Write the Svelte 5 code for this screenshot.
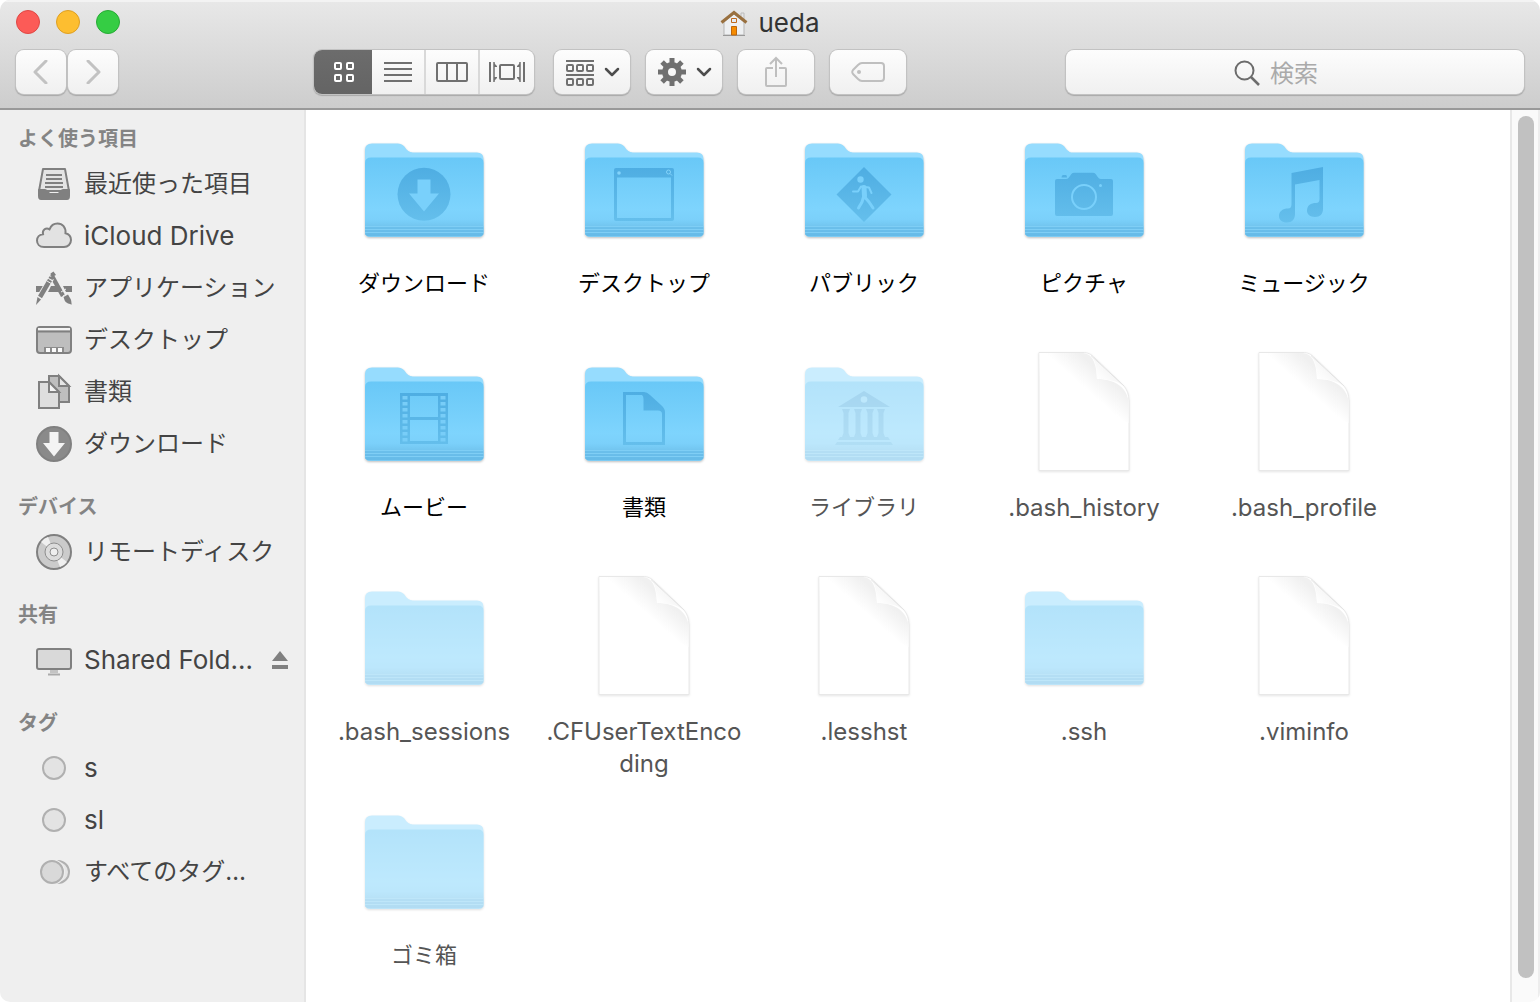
<script>
	const sections = [
		{
			title: 'よく使う項目',
			items: [
				{ name: '最近使った項目', icon: 'recents' },
				{ name: 'iCloud Drive', icon: 'cloud' },
				{ name: 'アプリケーション', icon: 'apps' },
				{ name: 'デスクトップ', icon: 'desktop' },
				{ name: '書類', icon: 'documents' },
				{ name: 'ダウンロード', icon: 'downloads' }
			]
		},
		{ title: 'デバイス', items: [{ name: 'リモートディスク', icon: 'disc' }] },
		{ title: '共有', items: [{ name: 'Shared Fold…', icon: 'monitor', eject: true }] },
		{
			title: 'タグ',
			items: [
				{ name: 's', icon: 'tag' },
				{ name: 'sl', icon: 'tag' },
				{ name: 'すべてのタグ…', icon: 'tags' }
			]
		}
	];

	const files = [
		{ name: 'ダウンロード', glyph: 'downloads' },
		{ name: 'デスクトップ', glyph: 'desktop' },
		{ name: 'パブリック', glyph: 'public' },
		{ name: 'ピクチャ', glyph: 'pictures' },
		{ name: 'ミュージック', glyph: 'music' },
		{ name: 'ムービー', glyph: 'movies' },
		{ name: '書類', glyph: 'documents' },
		{ name: 'ライブラリ', glyph: 'library', hidden: true },
		{ name: '.bash_history', doc: true, hidden: true },
		{ name: '.bash_profile', doc: true, hidden: true },
		{ name: '.bash_sessions', hidden: true },
		{ name: '.CFUserTextEncoding', doc: true, hidden: true },
		{ name: '.lesshst', doc: true, hidden: true },
		{ name: '.ssh', hidden: true },
		{ name: '.viminfo', doc: true, hidden: true },
		{ name: 'ゴミ箱', hidden: true }
	];

	const views = ['アイコン', 'リスト', 'カラム', 'Cover Flow'];

	let view = $state(0);
	let query = $state('');

	// kana and kanji are set a little smaller than latin
	const isJa = (text) => /[\u3040-\u30ff\u4e00-\u9fff]/.test(text);
</script>

{#snippet chevron()}
	<svg width="16" height="10" viewBox="0 0 16 10" fill="none" stroke="#4d4d4d" stroke-width="2.500" stroke-linecap="round" stroke-linejoin="round">
		<path d="M2 2 8 8 14 2" />
	</svg>
{/snippet}

{#snippet sideIcon(kind)}
	<svg class="side-icon" width="36" height="36" viewBox="0 0 36 36" fill="none" stroke="#808080" stroke-width="2">
		{#if kind === 'recents'}
			<path d="M7 2H29L33 24H3Z" fill="#e4e4e4" stroke-linejoin="round" />
			<path d="M10 8H26M10 12H26M9 16H27M9 20H27" />
			<path d="M3 23H9C11 23 11 26 14 27H22C25 26 25 23 27 23H33V29Q33 32 31 32H5Q3 32 3 29Z" fill="#808080" stroke-linejoin="round" />
		{:else if kind === 'cloud'}
			<path d="M8 28C3.500 28 1 25 1 21.500C1 18 3.500 15.500 7 15.200C6 11 10 8 13.500 10.300C15 6.500 18 4.500 21.500 4.500C26.500 4.500 30 8.500 29.500 14.200C33 15 35 17.500 35 21C35 25 32 28 28 28Z" fill="#e2e2e2" />
		{:else if kind === 'apps'}
			<path d="M0 15H9L6 21H0ZM15 15H21L24 21H12ZM27 15H36V21H30Z" fill="#808080" stroke="none" />
			<path d="M16 5 27 25" stroke-width="4.500" />
			<path d="M14.500 2.500 17.500 0.500 20 4 16 6Z" fill="#808080" stroke="none" />
			<path d="M27.500 26 32 23.500 34 27C36 30 35 32 36 33.500C32 33 29 31 28.500 29Z" fill="#808080" stroke="none" />
			<path d="M15 7 3 28" stroke="#efefef" stroke-width="6.500" />
			<path d="M14 9 4 26" stroke-width="4.500" />
			<path d="M14.500 8 16.500 4.500" stroke-width="4.500" stroke-dasharray="2 1" />
			<path d="M1.500 26 5 28.500 0 34Z" fill="#808080" stroke="none" />
			<path d="M11 10 16 13M25 21 30 18M27 25 32 22" stroke="#efefef" stroke-width="1" />
		{:else if kind === 'desktop'}
			<rect x="1" y="4" width="34" height="26" rx="3" fill="#bebebe" />
			<path d="M2 5H34V7.500H2Z" fill="#f4f4f4" stroke="none" />
			<path d="M1 8.500H35" />
			<path d="M8 24H28V29H8Z" fill="#8c8c8c" stroke="none" />
			<path d="M10 25H14V29H10ZM16 25H20V29H16ZM22 25H26V29H22Z" fill="#fafafa" stroke="none" />
		{:else if kind === 'documents'}
			<path d="M13 1H23L33 11V27H13Z" fill="#bebebe" />
			<path d="M23 1V11H33Z" fill="#e6e6e6" />
			<path d="M3 7H13L23 17V33H3Z" fill="#dedede" />
			<path d="M13 7V17H23Z" fill="#f4f4f4" />
		{:else if kind === 'downloads'}
			<circle cx="18" cy="17" r="17" fill="#8a8a8a" />
			<path d="M13.500 5H22.500V16H29L18 29.500 7 16H13.500Z" fill="#f4f4f4" stroke="none" />
		{:else if kind === 'disc'}
			<circle cx="18" cy="17" r="17" fill="#cbcbcb" />
			<path d="M18 17 5 7Q8 3 12 2ZM18 17 31 27Q28 31 24 32Z" fill="#f0f0f0" stroke="none" />
			<circle cx="18" cy="17" r="9" fill="#dcdcdc" stroke="#8e8e8e" stroke-width="1" />
			<circle cx="18" cy="17" r="4" fill="#efefef" stroke="#8e8e8e" stroke-width="1" />
		{:else if kind === 'monitor'}
			<rect x="1" y="6" width="34" height="20" rx="2" fill="#d9d9d9" />
			<path d="M14 27H22V30H14Z" fill="#c4c4c4" stroke="none" />
			<path d="M12 31.500H24" stroke="#aaa" />
		{:else if kind === 'tag'}
			<circle cx="18" cy="17" r="11" fill="#e3e3e3" stroke="#b0b0b0" />
		{:else}
			<circle cx="22" cy="17" r="11" fill="#e6e6e6" stroke="#b0b0b0" />
			<circle cx="16" cy="17" r="13" fill="#efefef" stroke="none" />
			<circle cx="16" cy="17" r="11" fill="#d9d9d9" stroke="#b0b0b0" />
		{/if}
	</svg>
{/snippet}

{#snippet folder(glyph)}
	<path d="M5 26Q5 19.500 12 19.500H38C46 19.500 45 28.500 53 28.500H117Q123.500 28.500 123.500 35V108Q123.500 113 119 113H10Q5 113 5 108Z" fill="#96dcfe" />
	<path d="M5 39Q5 33.500 11 33.500H118Q123.500 33.500 123.500 39V108Q123.500 112.500 119 112.500H10Q5 112.500 5 108Z" fill="url(#front)" />
	<path d="M5 102.500H123.500M5 105.500H123.500M5 108.500H123.500" stroke="#7fcef5" stroke-width="1" />
	<path d="M5 104H123.500M5 107H123.500M5 110H123.500" stroke="#66bae8" stroke-width="1" />
	<g fill="url(#engrave)">
		{#if glyph === 'downloads'}
			<circle cx="64" cy="70.300" r="26.500" />
			<path d="M57.500 55.500H70.500V69.500H79L64 87.500 49 69.500H57.500Z" fill="#79d0fb" />
		{:else if glyph === 'desktop'}
			<rect x="34" y="44" width="60" height="53" rx="2" />
			<path d="M37 53.500H91V94H37Z" fill="url(#front)" />
			<circle cx="39" cy="49" r="1.800" fill="#83d3fa" />
			<g fill="none" stroke="#83d3fa"><circle cx="88.500" cy="48" r="2" /><path d="M90 49.500 92 51.500" /></g>
		{:else if glyph === 'public'}
			<path d="M64 43 91.500 70.500 64 98 36.500 70.500Z" />
			<circle cx="60.500" cy="55.500" r="3.200" fill="#79d0fb" />
			<g fill="none" stroke="#79d0fb" stroke-linecap="round" stroke-linejoin="round">
				<path d="M53 67.500H58L61 62.500 69 63.500 71.500 69" stroke-width="2" />
				<path d="M64 63.500 64.500 72" stroke-width="5" />
				<path d="M63.500 73 62 78 58.500 84M65.500 74 69 78 73 84" stroke-width="3" />
			</g>
		{:else if glyph === 'pictures'}
			<path d="M37 55H46C50 55 50 48.700 54 48.700H73C77 48.700 77 55 81 55H91Q93 55 93 57V90Q93 92 91 92H37Q35 92 35 90V57Q35 55 37 55ZM43 51H46Q47 51 47 53.500H41.500Q41.500 51 43 51Z" />
			<circle cx="64" cy="73" r="12" fill="none" stroke="#79d0fb" stroke-width="2" />
			<circle cx="80.500" cy="61.500" r="1.500" fill="#79d0fb" />
		{:else if glyph === 'music'}
			<path d="M51.500 49 83 43V85C83 90 80 93 75 93C70 93 67 90 67 87C67 81 71 79 76 79C78 79 79.500 78 79.500 75V56L55 60.500V90C55 95 52 98.500 47 98.500C42 98.500 39 96 39 92C39 87 43 84.500 48 84.500C50.500 84.500 51.500 83 51.500 80Z" />
		{:else if glyph === 'movies'}
			<path d="M40 45H88V96H40Z" />
			<path d="M50 48H78V69H50ZM50 72H78V93H50Z" fill="url(#front)" />
			<path d="M45 48V94M83 48V94" stroke="#78cdf8" stroke-width="5" stroke-dasharray="3.500 2.500" />
		{:else if glyph === 'documents'}
			<path d="M43 44H64Q67 44 70 47L81 57Q85 60.500 85 64V97H43Z" />
			<path d="M46 47H62Q63.500 48 63.500 51V62.500H78Q82 62.500 82 66V94H46Z" fill="url(#front)" />
		{:else if glyph === 'library'}
			<path d="M64 43 90 59H38Z" />
			<circle cx="64" cy="51.500" r="3.300" fill="#7dd2fb" />
			{#each [46, 58, 70, 81] as x}
				<path d="M{x - 4} 61H{x + 4}L{x + 2.5} 65V85L{x + 4} 89H{x - 4}L{x - 2.5} 85V65Z" />
			{/each}
			<path d="M40 89H88L90 92H38ZM37 94H91L93 97H35Z" />
		{/if}
	</g>
{/snippet}

{#snippet paper()}
	<path d="M19 4.500H63C68 4.500 71 6 75 10L104 38Q109 44 109 53V122.500H19Z" fill="#fff" stroke="#e8e8e8" />
	<path d="M19.500 5H63C71 6 76 11 77 31C92 31 106 37 108.500 53V75L20 30Z" fill="url(#curl)" />
	<path d="M71 7.500C75 12 77 20 77 31C88 31 97 33 104 38Z" fill="url(#flap)" />
	<path d="M71 7.500 104 38" stroke="#e3e3e3" />
{/snippet}

<svg class="defs" width="0" height="0" aria-hidden="true">
	<defs>
		<linearGradient id="front" gradientUnits="userSpaceOnUse" x1="0" y1="34" x2="0" y2="113">
			<stop offset="0" stop-color="#69c8f7" />
			<stop offset="0.650" stop-color="#7ed4fd" />
			<stop offset="0.780" stop-color="#7bd0fa" />
			<stop offset="0.880" stop-color="#70c3ed" />
			<stop offset="1" stop-color="#65bae7" />
		</linearGradient>
		<linearGradient id="engrave" gradientUnits="userSpaceOnUse" x1="0" y1="43" x2="0" y2="98">
			<stop offset="0" stop-color="#4eade2" />
			<stop offset="1" stop-color="#65bfec" />
		</linearGradient>
		<linearGradient id="curl" gradientUnits="userSpaceOnUse" x1="82" y1="25" x2="67" y2="42">
			<stop offset="0" stop-color="#f0f0f0" />
			<stop offset="1" stop-color="#fff" />
		</linearGradient>
		<linearGradient id="flap" gradientUnits="userSpaceOnUse" x1="77" y1="31" x2="88" y2="21">
			<stop offset="0" stop-color="#fff" />
			<stop offset="1" stop-color="#f6f6f6" />
		</linearGradient>
	</defs>
</svg>

<div class="window">
	<header>
		<div class="titlebar">
			<div class="lights">
				<button class="close" aria-label="閉じる"></button>
				<button class="minimize" aria-label="しまう"></button>
				<button class="zoom" aria-label="拡大"></button>
			</div>
			<h1>
				<svg width="28" height="28" viewBox="0 0 28 28">
					<path d="M21 4H24V11H21Z" fill="#e6e6e6" stroke="#bbb" />
					<path d="M4 13 14 5 24 13V26H4Z" fill="#eef0f2" stroke="#b5b5b5" />
					<path d="M3 26.500H25" stroke="#999" />
					<path d="M1.500 13.500 14 3.500 26.500 13.500" fill="none" stroke="#99703f" stroke-width="3" />
					<path d="M11.500 9.500H16.500V13.500H11.500Z" fill="#e6edf5" stroke="#c06a1d" />
					<path d="M11.500 17.500H16.500V26H11.500Z" fill="#f58b00" stroke="#bd660c" />
				</svg>
				ueda
			</h1>
		</div>
		<div class="toolbar">
			<div class="history">
				<button aria-label="戻る">
					<svg width="16" height="24" viewBox="0 0 16 24" fill="none" stroke="#c2c2c2" stroke-width="3" stroke-linecap="round" stroke-linejoin="round"><path d="M13 1 2 12 13 23" /></svg>
				</button>
				<button aria-label="進む">
					<svg width="16" height="24" viewBox="0 0 16 24" fill="none" stroke="#c2c2c2" stroke-width="3" stroke-linecap="round" stroke-linejoin="round"><path d="M3 1 14 12 3 23" /></svg>
				</button>
			</div>
			<div class="space-left"></div>
			<div class="views">
				{#each views as label, i}
					<button class:active={view === i} aria-label={label} aria-pressed={view === i} onclick={() => (view = i)}>
						<svg width="36" height="24" viewBox="0 0 36 24" fill="none" stroke="currentColor" stroke-width="2">
							{#if i === 0}
								<rect x="9" y="3" width="6" height="6" rx="1" />
								<rect x="21" y="3" width="6" height="6" rx="1" />
								<rect x="9" y="15" width="6" height="6" rx="1" />
								<rect x="21" y="15" width="6" height="6" rx="1" />
							{:else if i === 1}
								<path d="M4 3H32M4 9H32M4 15H32M4 21H32" />
							{:else if i === 2}
								<rect x="3" y="3" width="30" height="18" rx="1" />
								<path d="M13 3V21M23 3V21" />
							{:else}
								<path d="M1 2V22M35 2V22" />
								<path d="M5 2V22M31 2V22" stroke-width="1.500" />
								<path d="M5 3 8 6V7H5ZM5 21 8 18V17H5ZM31 3 28 6V7H31ZM31 21 28 18V17H31Z" fill="currentColor" stroke="none" />
								<rect x="11" y="5" width="14" height="14" rx="1" />
							{/if}
						</svg>
					</button>
				{/each}
			</div>
			<div class="actions">
				<button class="menu" aria-label="項目のグループ" aria-haspopup="menu">
					<svg width="28" height="28" viewBox="0 0 28 28" fill="none" stroke="#707070" stroke-width="2">
						<path d="M0 3H28M0 17H28" />
						{#each [1, 11, 21] as x}
							<rect {x} y="7" width="6" height="6" rx="1" />
							<rect {x} y="21" width="6" height="6" rx="1" />
						{/each}
					</svg>
					{@render chevron()}
				</button>
				<button class="menu" aria-label="アクション" aria-haspopup="menu">
					<svg width="28" height="28" viewBox="0 0 28 28" fill="none" stroke="#707070">
						<circle cx="14" cy="14" r="7" stroke-width="6" />
						{#each [0, 45, 90, 135] as angle}
							<path d="M14 0V6M14 22V28" stroke-width="5" transform="rotate({angle} 14 14)" />
						{/each}
					</svg>
					{@render chevron()}
				</button>
				<button aria-label="共有">
					<svg width="24" height="32" viewBox="0 0 24 32" fill="none" stroke="#bfbfbf" stroke-width="2">
						<path d="M9 12H3Q2 12 2 13V29Q2 30 3 30H21Q22 30 22 29V13Q22 12 21 12H15M12 21V2M6 8 12 2 18 8" />
					</svg>
				</button>
				<button aria-label="タグを編集">
					<svg width="34" height="22" viewBox="0 0 34 22" fill="none" stroke="#bfbfbf" stroke-width="2">
						<path d="M11 2H30Q33 2 33 5V17Q33 20 30 20H11Q9 20 7 18L2 13Q0.500 11 2 9L7 4Q9 2 11 2Z" />
						<circle cx="8" cy="11" r="2" fill="#bfbfbf" stroke="none" />
					</svg>
				</button>
			</div>
			<div class="space-right"></div>
			<label class="search">
				<svg width="26" height="26" viewBox="0 0 26 26" fill="none" stroke="#6c6c6c" stroke-width="2">
					<circle cx="10.500" cy="10.500" r="9" />
					<path d="M17 17 25 25" stroke-width="2.500" />
				</svg>
				<input type="text" aria-label="検索" placeholder="検索" bind:value={query} />
			</label>
		</div>
	</header>

	<div class="body">
		<nav>
			{#each sections as section}
				<section>
					<h2>{section.title}</h2>
					<ul>
						{#each section.items as item}
							<li>
								<a href="#{item.icon}" class:ja={isJa(item.name)}>
									{@render sideIcon(item.icon)}
									<span>{item.name}</span>
								</a>
								{#if item.eject}
									<button class="eject" aria-label="取り出す">
										<svg width="16" height="20" viewBox="0 0 16 20" fill="#808080"><path d="M8 0 16 10H0ZM0 14H16V18H0Z" /></svg>
									</button>
								{/if}
							</li>
						{/each}
					</ul>
				</section>
			{/each}
		</nav>

		<main>
			{#each files as file}
				<a href="#{file.name}" class="file" class:hidden={file.hidden} class:ja={isJa(file.name)}>
					<svg class:doc={file.doc} width="128" height="128" viewBox="0 0 128 128">
						{#if file.doc}
							{@render paper()}
						{:else}
							{@render folder(file.glyph)}
						{/if}
					</svg>
					<span>{file.name}</span>
				</a>
			{/each}
		</main>

		<div class="scrollbar">
			<div class="thumb"></div>
		</div>
	</div>
</div>

<style>
	:global(body) {
		margin: 0;
		background: #fff;
	}

	.defs {
		position: absolute;
	}

	.window {
		display: flex;
		flex-direction: column;
		height: 100vh;
		overflow: hidden;
		border-radius: 10px;
		font-family: Inter, 'Noto Sans CJK JP', sans-serif;
		font-size: 26px;
		color: #444;
	}

	button {
		display: flex;
		align-items: center;
		justify-content: center;
		margin: 0;
		padding: 0;
		border: none;
		background: none;
		color: #707070;
	}

	header {
		flex: none;
		background: linear-gradient(#e8e8e8, #cdcdcd);
		border-bottom: 2px solid #999;
		box-shadow: inset 0 2px #f3f3f3;
	}

	.titlebar {
		display: grid;
		grid-template-columns: 1fr auto 1fr;
		align-items: center;
		height: 44px;
		padding: 0 16px;
	}

	.lights {
		display: flex;
		gap: 16px;
	}

	.lights button {
		box-sizing: border-box;
		width: 24px;
		height: 24px;
		border-radius: 50%;
	}

	.close {
		background: #fc5b57;
		border: 1px solid #df4744;
	}

	.minimize {
		background: #fdbe30;
		border: 1px solid #de9f22;
	}

	.zoom {
		background: #35cd44;
		border: 1px solid #27aa35;
	}

	h1 {
		display: flex;
		align-items: center;
		gap: 10px;
		margin: 0;
		padding-top: 2px;
		font-size: 26px;
		font-weight: 400;
		line-height: 32px;
		color: #333;
	}

	.toolbar {
		display: flex;
		height: 44px;
		padding: 6px 16px 14px;
	}

	.history,
	.views,
	.actions {
		display: flex;
		flex: none;
	}

	.history {
		gap: 2px;
	}

	.history button,
	.views,
	.actions button,
	.search {
		box-sizing: border-box;
		height: 44px;
		border-radius: 8px;
		background: linear-gradient(#fdfdfd, #f0f0f0);
		box-shadow: 0 0 0 1px #c2c2c2, 0 1px 1px 1px #a8a8a8;
	}

	.history button {
		width: 50px;
	}

	.space-left {
		flex: 196 1 0;
	}

	.space-right {
		flex: 160 1 0;
	}

	.views {
		overflow: hidden;
	}

	.views button {
		box-sizing: border-box;
		width: 54px;
	}

	.views button:first-child {
		width: 58px;
		padding-left: 2px;
	}

	.views button:nth-child(2) {
		width: 52px;
	}

	.views button:last-child {
		width: 56px;
	}

	.views button:nth-child(n + 3) {
		border-left: 2px solid #d9d9d9;
	}

	.views .active {
		background: linear-gradient(#6c6c6c, #646464);
		color: #fff;
	}

	.actions {
		gap: 16px;
		margin-left: 20px;
	}

	.actions button {
		width: 76px;
	}

	.actions .menu {
		justify-content: space-between;
		padding: 0 10px 0 12px;
	}

	.search {
		display: flex;
		align-items: center;
		gap: 10px;
		width: 458px;
		padding: 2px 0 0 168px;
	}

	.search svg {
		flex: none;
	}

	.search input {
		flex: 1;
		min-width: 0;
		padding: 0;
		border: none;
		outline: none;
		background: none;
		font-family: inherit;
		font-size: 24px;
		color: #333;
	}

	.search input::placeholder {
		color: #aaa;
		opacity: 1;
	}

	.body {
		display: flex;
		flex: 1;
		min-height: 0;
	}

	nav {
		box-sizing: border-box;
		flex: none;
		width: 306px;
		padding-top: 7px;
		border-right: 2px solid #e5e5e5;
		background: #efefef;
	}

	section + section {
		margin-top: 14px;
	}

	h2 {
		margin: 0;
		padding: 2px 0 0 18px;
		font-size: 20px;
		font-weight: 700;
		line-height: 40px;
		color: #848484;
	}

	ul {
		margin: 0;
		padding: 0;
		list-style: none;
	}

	li {
		display: flex;
		align-items: center;
		height: 52px;
		padding: 0 16px 0 36px;
	}

	li a {
		display: flex;
		flex: 1;
		align-items: center;
		gap: 12px;
		line-height: 32px;
		color: inherit;
		text-decoration: none;
		white-space: nowrap;
	}

	li a.ja {
		font-size: 24px;
	}

	li span {
		padding-bottom: 2px;
	}

	.side-icon {
		flex: none;
		overflow: visible;
	}

	main {
		display: grid;
		flex: 1;
		grid-template-columns: repeat(auto-fill, 220px);
		grid-auto-rows: 224px;
		align-content: start;
		min-width: 0;
		padding: 14px 8px 0;
		overflow-y: auto;
		scrollbar-width: none;
		background: #fff;
	}

	.file {
		display: flex;
		flex-direction: column;
		align-items: center;
		gap: 16px;
		padding: 0 12px;
		font-size: 24px;
		line-height: 32px;
		text-align: center;
		text-decoration: none;
		color: #000;
	}

	.file.ja {
		gap: 15px;
		font-size: 22px;
	}

	.file svg {
		flex: none;
		filter: drop-shadow(0 1px 1px rgba(0, 0, 0, 0.25));
	}

	.file svg.doc {
		filter: drop-shadow(0 1px 1px rgba(0, 0, 0, 0.1));
	}

	.file span {
		max-width: 100%;
		overflow-wrap: anywhere;
	}

	.file.hidden {
		color: #555;
	}

	.hidden svg:not(.doc) {
		opacity: 0.5;
	}

	.scrollbar {
		display: flex;
		box-sizing: border-box;
		flex: none;
		width: 30px;
		padding: 6px 4px 24px 6px;
		border-left: 2px solid #e8e8e8;
		border-right: 2px solid #ededed;
		background: #fafafa;
	}

	.thumb {
		flex: 1;
		border-radius: 8px;
		background: #c1c1c1;
	}
</style>
